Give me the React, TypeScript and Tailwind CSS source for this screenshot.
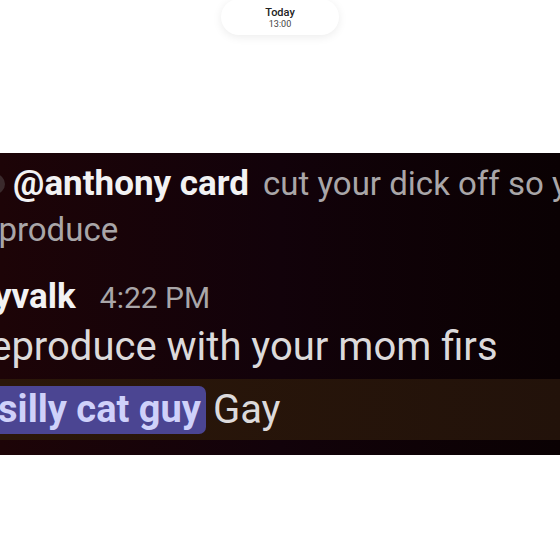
import React from "react";

export default function App() {
  const font = { fontFamily: 'Roboto, "Noto Sans", sans-serif' };
  return (
    <div className="w-[560px] h-[560px] bg-white overflow-hidden flex flex-col" style={font}>
      <div className="flex justify-center">
        <div className="w-[118px] h-[36px] -mt-[1px] rounded-[18px] bg-white shadow-[0_2px_10px_rgba(0,0,0,0.08)] flex flex-col items-center justify-center pt-[1px]">
          <span className="text-[11px] leading-[13px] font-medium text-[#222]">Today</span>
          <span className="text-[9px] leading-[11px] text-[#444]">13:00</span>
        </div>
      </div>
      <div className="mt-[118px] h-[302px] overflow-hidden bg-gradient-to-r from-[#1d0407] via-[#12020a] to-[#0a0103] flex flex-col">
        <div className="flex items-center h-[58px] pt-[4px] whitespace-nowrap">
          <div className="w-[20px] h-[20px] rounded-full bg-[#3a2a2c] -ml-[15px] mr-[8px] shrink-0"></div>
          <span className="text-[35px] font-bold text-[#f2f2f3]">@anthony card</span>
          <span className="text-[33px] text-[#a9a6a8] ml-[14px]">cut your dick off so you can't reproduce</span>
        </div>
        <div className="h-[50px] -mt-[6px] whitespace-nowrap -ml-[30px] leading-[50px]">
          <span className="text-[33px] text-[#a9a6a8]">reproduce</span>
        </div>
        <div className="flex items-baseline h-[62px] pt-[16px] whitespace-nowrap -ml-[6px]">
          <span className="text-[35px] font-bold text-[#f2f2f3]">yvalk</span>
          <span className="text-[30px] text-[#a9a6a8] ml-[24px]">4:22 PM</span>
        </div>
        <div className="h-[62px] whitespace-nowrap -ml-[23px] leading-[60px]">
          <span className="text-[40px] text-[#dcdadb]">reproduce with your mom firs</span>
        </div>
        <div className="h-[61px] bg-gradient-to-r from-[#2b1709] to-[#22120a] flex items-center whitespace-nowrap">
          <span className="-ml-[42px] pl-[6px] pr-[5px] h-[48px] flex items-center rounded-[7px] bg-[#4b4592] text-[38px] font-bold text-[#cfd1fa]">@silly cat guy</span>
          <span className="text-[40px] text-[#dcdadb] ml-[7px]">Gay</span>
        </div>
      </div>
    </div>
  );
}
